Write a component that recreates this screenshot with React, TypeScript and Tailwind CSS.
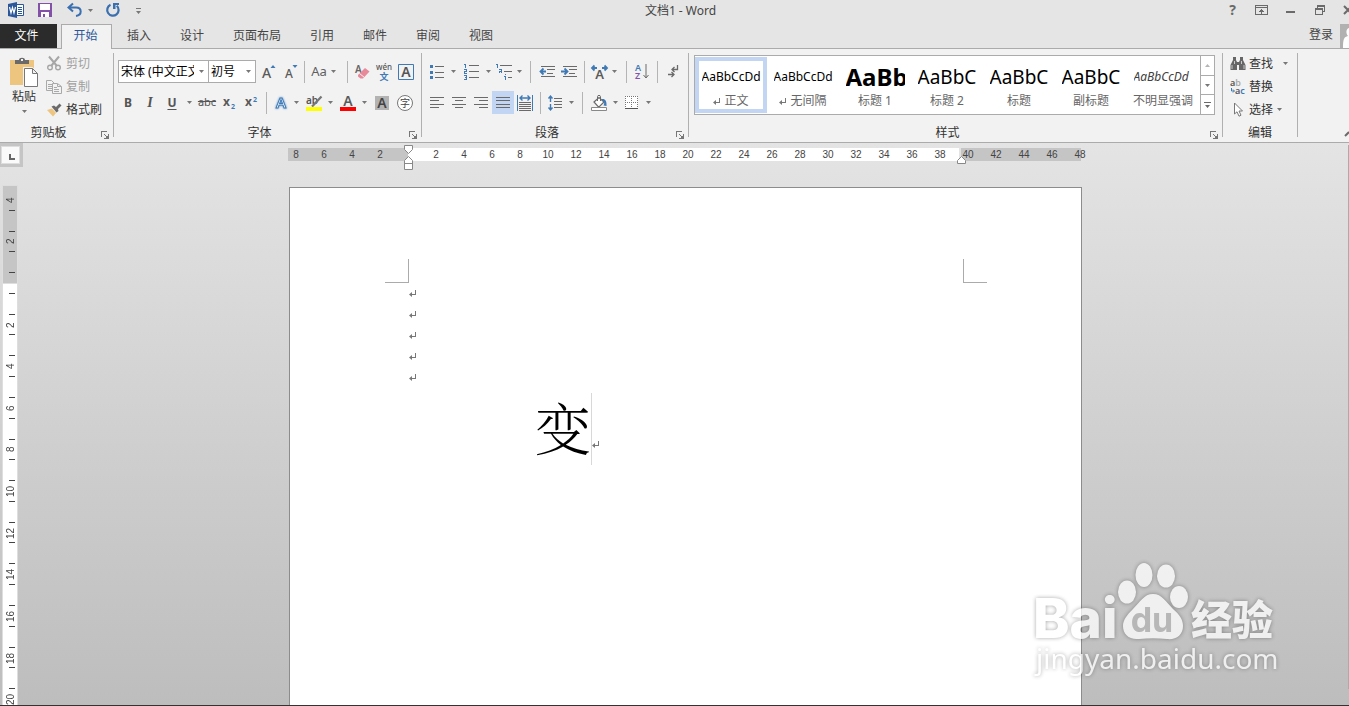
import type { ReactNode } from "react";

const UI = "font-['Noto_Sans','Noto_Sans_CJK_SC',sans-serif]";
const GRAY = "#6a6a6a";
const BLUE = "#3f7ab5";

function Arrow({ w = "w-2.5", color = "#777" }: { w?: string; color?: string }) {
  return (
    <span className={`${w} flex shrink-0 items-center justify-center`}>
      <svg width="5" height="3" viewBox="0 0 5 3" aria-hidden="true">
        <path d="M0 0H5L2.5 3Z" fill={color} />
      </svg>
    </span>
  );
}

function ArrowButton({ w = "w-2.5", label }: { w?: string; label: string }) {
  return (
    <button type="button" aria-label={label} className={`${w} flex h-[23px] shrink-0 items-center justify-center`}>
      <Arrow w="w-full" />
    </button>
  );
}

function Tool({ w = "w-[22px]", label, active = false, children }: { w?: string; label: string; active?: boolean; children: ReactNode }) {
  return (
    <button
      type="button"
      aria-label={label}
      className={`${w} flex h-[23px] shrink-0 items-center justify-center ${active ? "bg-[#c2d5f2]" : ""}`}
    >
      {children}
    </button>
  );
}

function Sep({ w = "w-2" }: { w?: string }) {
  return (
    <span className={`${w} flex h-[22px] shrink-0 justify-center`}>
      <span className="w-px bg-[#b4b4b4]" />
    </span>
  );
}

function Pic({ w = 16, h = 16, crisp = false, children }: { w?: number; h?: number; crisp?: boolean; children: ReactNode }) {
  return (
    <svg
      width={w}
      height={h}
      viewBox={`0 0 ${w} ${h}`}
      fill="none"
      className="shrink-0 overflow-visible"
      shapeRendering={crisp ? "crispEdges" : "auto"}
      aria-hidden="true"
    >
      {children}
    </svg>
  );
}

function Group({ title, width, launcher = true, children }: { title: string; width: string; launcher?: boolean; children: ReactNode }) {
  return (
    <section className={`${width} flex shrink-0`}>
      <div className="flex min-w-0 flex-1 flex-col">
        {children}
        <div className="mt-auto flex h-[18px] items-center">
          <h2 className={`flex-1 text-center text-xs text-[#333] ${launcher ? "pr-1" : ""}`}>{title}</h2>
          {launcher && (
            <button type="button" aria-label={`${title}设置`} className="flex w-3 items-center pt-1">
              <Pic w={8} h={8} crisp>
                <path d="M0.5 6V0.5H6M3 3L6 6M7.5 3V7.5H3" stroke="#777" />
                <path d="M4 7H7V4Z" fill="#777" />
              </Pic>
            </button>
          )}
        </div>
      </div>
      <div className="mt-1 mb-[5px] w-px bg-[#b0b0b0]" />
    </section>
  );
}

function Combo({ label, value, className }: { label: string; value: string; className: string }) {
  return (
    <div className={`relative h-[23px] shrink-0 ${className}`}>
      <select
        aria-label={label}
        className="block h-full w-full appearance-none overflow-hidden border border-[#ababab] bg-white pr-[14px] pl-0.5 text-xs text-black"
      >
        <option>{value}</option>
      </select>
      <span className="pointer-events-none absolute inset-y-0 right-[5px] flex items-center">
        <Arrow w="w-[5px]" />
      </span>
    </div>
  );
}

function TitleBar() {
  return (
    <header className="flex h-6 items-start text-xs">
      <div className="flex h-5 flex-1 items-center pl-2">
        <Pic>
          <path d="M8 2.5H15.5V13.5H8" fill="#fff" stroke="#2b579a" />
          <path d="M10 5.5H14M10 7.5H14M10 9.5H14M10 11.5H14" stroke="#2b579a" />
          <path d="M0 2L9 0V16L0 14Z" fill="#2b579a" />
          <path d="M1.5 5L3 11L4.5 5.5L6 11L7.5 5" stroke="#fff" strokeWidth="1.2" />
        </Pic>
        <button type="button" aria-label="保存" className="ml-1 flex w-[34px] justify-center">
          <Pic w={14} h={14} crisp>
            <path d="M0 0H14V14H0Z" fill="#8351a8" />
            <path d="M2 1H12V7H2ZM3 9H11V14H3Z" fill="#fff" />
            <path d="M5 11H7V14H5Z" fill="#8351a8" />
          </Pic>
        </button>
        <button type="button" aria-label="撤消" className="flex w-6 justify-center">
          <Pic w={15} h={14}>
            <path d="M6 0.5L1.5 4.5L6 8.5M2 4.5H9C12 4.5 13.7 6.3 13.7 8.5C13.7 11 12 12.5 9 12.9" stroke="#3a6fb0" strokeWidth="2" />
          </Pic>
        </button>
        <ArrowButton w="w-2" label="撤消选项" />
        <button type="button" aria-label="重复" className="flex w-[38px] justify-center">
          <Pic w={14} h={14}>
            <path d="M4.500 1.800A5.700 5.700 0 1 0 10.800 2.800" stroke="#3a6fb0" strokeWidth="2.200" />
            <path d="M7 0H13V2H9.500V6H7Z" fill="#3a6fb0" />
          </Pic>
        </button>
        <button type="button" aria-label="自定义快速访问工具栏" className="flex w-3 justify-center pt-0.5">
          <Pic w={5} h={6}>
            <path d="M0 0H5V1H0ZM0 3H5L2.5 6Z" fill="#777" />
          </Pic>
        </button>
      </div>
      <h1 className="flex h-[22px] items-center pl-1 text-[#444]">文档1 - Word</h1>
      <div className="flex h-5 flex-1 items-center justify-end overflow-hidden">
        <button type="button" aria-label="帮助" className="flex w-[29px] justify-center text-sm font-bold text-[#6a6a6a]">?</button>
        <button type="button" aria-label="功能区显示选项" className="flex w-[29px] justify-center">
          <Pic w={13} h={10} crisp>
            <path d="M0.5 0.5H12.5V9.5H0.5ZM1 2.5H12M6.5 4V9M4 6.5H9M5 5.5H8" stroke={GRAY} />
          </Pic>
        </button>
        <button type="button" aria-label="最小化" className="flex w-[29px] justify-center pt-1">
          <Pic w={9} h={2} crisp>
            <path d="M0 0H9V2H0Z" fill={GRAY} />
          </Pic>
        </button>
        <button type="button" aria-label="还原" className="flex w-[29px] justify-center">
          <Pic w={10} h={10} crisp>
            <path d="M2.5 3V0.5H9.5V6.5H8M0.5 3.5H7.5V9.5H0.5ZM1 4.5H7M3 1.5H9" stroke={GRAY} />
          </Pic>
        </button>
        <button type="button" aria-label="关闭" className="flex w-[15px] justify-end">
          <Pic w={5} h={10}>
            <path d="M0 1L8 9M0 9L8 1" stroke={GRAY} strokeWidth="2" />
          </Pic>
        </button>
      </div>
    </header>
  );
}

const TABS = ["插入", "设计", "页面布局", "引用", "邮件", "审阅", "视图"];

function Tabs() {
  return (
    <nav className="flex h-[25px] text-xs text-[#444]">
      <button type="button" className="w-[57px] bg-[#2b2b2b] pr-1 pb-0.5 text-white">文件</button>
      <button type="button" className="relative z-10 ml-1 w-[51px] border border-b-0 border-[#ababab] bg-[#f2f2f2] pr-0.5 pb-0.5 text-[#2b579a]">
        开始
      </button>
      <div className="ml-[15px] flex gap-[29px] pb-0.5">
        {TABS.map((t) => (
          <button key={t} type="button" className="shrink-0">{t}</button>
        ))}
      </div>
      <div className="ml-auto flex items-stretch gap-[7px]">
        <button type="button" className="pb-[3px]">登录</button>
        <Pic w={9} h={24}>
          <path d="M0 0H9V24H0Z" fill="#b1b1b1" />
          <path d="M9 4C5.500 5 6 10 8 12C4 13 3 15 3 24H9Z" fill="#fff" />
        </Pic>
      </div>
    </nav>
  );
}

function Clipboard() {
  return (
    <Group title="剪贴板" width="w-[114px]">
      <div className="flex pt-[3px] text-xs text-[#333]">
        <button type="button" className="flex w-[46px] flex-col items-center pt-[5px] pl-0.5">
          <Pic w={28} h={31}>
            <path d="M0 3H24V28H0Z" fill="#edc57e" />
            <path d="M5 7V3H9C9 0 15 0 15 3H19V7Z" fill="#6a6a6a" />
            <path d="M11 2H13V4H11Z" fill="#f2f2f2" />
            <path d="M13 10H22.500L28 15.500V31H13Z" fill="#f2f2f2" />
            <path d="M14.500 11.500H22.500L27.500 16.500V29.500H14.500ZM22.500 11.500V16.500H27.500" fill="#fff" stroke="#777" />
          </Pic>
          <span className="leading-[18px]">粘贴</span>
          <span className="flex h-2.5 items-center">
            <Arrow />
          </span>
        </button>
        <div className="flex flex-col">
          <button type="button" className="flex h-[23px] items-center gap-1 text-[#a0a0a0]">
            <span className="flex w-4 justify-center">
              <Pic w={14} h={15}>
                <path d="M2 0.500L9.500 9.500M12 0.500L4.500 9.500" stroke="#a6a6a6" strokeWidth="2" />
                <circle cx="3" cy="11.500" r="2.300" stroke="#a6a6a6" strokeWidth="1.400" />
                <circle cx="11" cy="11.500" r="2.300" stroke="#a6a6a6" strokeWidth="1.400" />
              </Pic>
            </span>
            剪切
          </button>
          <button type="button" className="flex h-[23px] items-center gap-1 text-[#a0a0a0]">
            <Pic w={16} h={14}>
              <path d="M7 10.500H0.500V0.500H5.500L8.500 3.500M2 4.500H6M2 6.500H6M2 8.500H6" stroke="#a9a9a9" />
              <path d="M6.500 3.500H11.500L15.500 6.500V13.500H6.500ZM11.500 4V6.500H15M8 7.500H11M8 9.500H13M8 11.500H13" fill="#f2f2f2" stroke="#a9a9a9" />
            </Pic>
            复制
          </button>
          <button type="button" className="flex h-[23px] items-center gap-1">
            <Pic w={16} h={14}>
              <path d="M1 7L6 5.500L10 10L7 13.500Z" fill="#edc57e" />
              <path d="M5.500 3.500L8 2.500L10 4L13.500 0.500L15.500 2.500L12 6L12.500 8L10.500 9.500Z" fill="#6a6a6a" />
            </Pic>
            格式刷
          </button>
        </div>
      </div>
    </Group>
  );
}

function FontGroup() {
  return (
    <Group title="字体" width="w-[308px]">
      <div className="flex items-center pt-[11px] pl-1 text-[#5f5f5f]">
        <Combo label="字体" value="宋体 (中文正文)" className="w-[91px]" />
        <Combo label="字号" value="初号" className="-ml-px w-12" />
        <Tool w="w-[23px]" label="增大字号">
          <Pic w={12} h={16}>
            <text x="0" y="14" fontSize="14" fontWeight="500" fill="#5a5a5a">A</text>
            <path d="M8.500 4L11 1L13.500 4Z" fill={BLUE} />
          </Pic>
        </Tool>
        <Tool label="减小字号">
          <Pic w={12} h={16}>
            <text x="1" y="14" fontSize="12" fontWeight="500" fill="#5a5a5a">A</text>
            <path d="M8.500 1L11 4L13.500 1Z" fill={BLUE} />
          </Pic>
        </Tool>
        <Sep w="w-1.5" />
        <Tool w="w-[37px]" label="更改大小写">
          <span className="text-[13px]">Aa</span>
          <Arrow w="w-[13px]" />
        </Tool>
        <Sep w="w-1.5" />
        <Tool w="w-6" label="清除所有格式">
          <Pic w={14}>
            <text x="0" y="9" fontSize="10" fontWeight="600" fill="#666">A</text>
            <path d="M3 11L10 4L14.500 7.500L8 14.500H5.500L3 12.500Z" fill="#e8899a" />
            <path d="M4.500 9.500L9.500 13.500" stroke="#f2f2f2" />
          </Pic>
        </Tool>
        <Tool label="拼音指南">
          <Pic w={18} h={18}>
            <text x="8" y="7" fontSize="8" fontWeight="500" textAnchor="middle" fill="#555">wén</text>
            <text x="8" y="17" fontSize="9" fontWeight="700" textAnchor="middle" fill={BLUE}>文</text>
          </Pic>
        </Tool>
        <Tool w="w-5" label="字符边框">
          <Pic w={16} h={16}>
            <path d="M0.500 0.500H15.500V15.500H0.500Z" stroke={BLUE} />
            <text x="8" y="13" fontSize="14" fontWeight="600" textAnchor="middle" fill="#555">A</text>
          </Pic>
        </Tool>
      </div>
      <div className="flex items-center pt-2 pl-[3px] text-xs text-[#555]">
        <Tool label="加粗"><b>B</b></Tool>
        <Tool label="倾斜"><i className="font-['Liberation_Serif',serif] text-sm font-bold">I</i></Tool>
        <Tool label="下划线"><span className="font-bold underline underline-offset-2">U</span></Tool>
        <ArrowButton w="w-3" label="下划线样式" />
        <Tool w="w-6" label="删除线"><span className="text-[11px] line-through">abc</span></Tool>
        <Tool label="下标">
          <Pic w={14} h={14}>
            <text x="0" y="10" fontSize="12" fontWeight="700" fill="#5a5a5a">x</text>
            <text x="8" y="13" fontSize="7" fontWeight="700" fill={BLUE}>2</text>
          </Pic>
        </Tool>
        <Tool label="上标">
          <Pic w={14} h={14}>
            <text x="0" y="10" fontSize="12" fontWeight="700" fill="#5a5a5a">x</text>
            <text x="8" y="6" fontSize="7" fontWeight="700" fill={BLUE}>2</text>
          </Pic>
        </Tool>
        <Sep w="w-1.5" />
        <Tool label="文本效果">
          <Pic w={14} h={16}>
            <text x="8" y="13" fontSize="15" fontWeight="600" textAnchor="middle" fill="#fff" stroke={BLUE} strokeWidth="1" className="drop-shadow-[0_0_1px_#5b93cf]">A</text>
          </Pic>
        </Tool>
        <ArrowButton label="文本效果选项" />
        <Tool w="w-6" label="突出显示">
          <Pic w={15} h={16}>
            <text x="0" y="9" fontSize="10" fontWeight="600" fill="#555">ab</text>
            <path d="M15.500 1.500L8 9.500L6 11.500" stroke="#777" strokeWidth="2.200" />
            <path d="M0 12H16V16H0Z" fill="#ffff00" />
          </Pic>
        </Tool>
        <ArrowButton label="突出显示颜色" />
        <Tool w="w-6" label="字体颜色">
          <Pic w={14} h={16}>
            <text x="8" y="11" fontSize="14" fontWeight="600" textAnchor="middle" fill="#5a5a5a">A</text>
            <path d="M0 12H16V16H0Z" fill="#ff0000" />
          </Pic>
        </Tool>
        <ArrowButton label="字体颜色选项" />
        <Tool w="w-[26px]" label="字符底纹">
          <Pic w={14} h={14}>
            <path d="M0 0H14V14H0Z" fill="#b3b3b3" />
            <text x="7" y="12" fontSize="14" fontWeight="600" textAnchor="middle" fill="#444">A</text>
          </Pic>
        </Tool>
        <Tool w="w-5" label="带圈字符">
          <Pic w={16} h={16}>
            <circle cx="8" cy="8" r="7.500" fill="#fff" stroke="#777" />
            <text x="8" y="12" fontSize="10" textAnchor="middle" fill="#444">字</text>
          </Pic>
        </Tool>
      </div>
    </Group>
  );
}

function Lines({ d }: { d: string }) {
  return (
    <Pic w={14} h={11} crisp>
      <path d={d} stroke={GRAY} />
    </Pic>
  );
}

function ParagraphGroup() {
  return (
    <Group title="段落" width="w-[267px]">
      <div className="flex items-center pt-[11px] pl-1">
        <Tool label="项目符号">
          <Pic w={14} h={15} crisp>
            <path d="M5 2.500H14M5 8.500H14M5 13.500H14" stroke={GRAY} />
            <path d="M0 1H3V4H0ZM0 7H3V10H0ZM0 12H3V15H0Z" fill={BLUE} />
          </Pic>
        </Tool>
        <ArrowButton label="项目符号库" />
        <Tool w="w-[26px]" label="编号">
          <Pic w={15} h={17} crisp>
            <path d="M5 2.500H15M5 8.500H15M5 14.500H15" stroke={GRAY} />
            <path d="M0 1.500H1.500V5M0 6.500H2.500V8.500H0.500V10.500H3M0 12.500H2.500V16.500H0M1 14.500H2" stroke={BLUE} />
          </Pic>
        </Tool>
        <ArrowButton w="w-2" label="编号库" />
        <Tool label="多级列表">
          <Pic w={16} h={17} crisp>
            <path d="M5 2.500H17M9 8.500H17M13 14.500H17" stroke={GRAY} />
            <path d="M1 1.500H2.500V5M4 6.500H6.500V10M7 8.500H4.500V10M10.500 11V12M9 13.500H10.500V17" stroke={BLUE} />
          </Pic>
        </Tool>
        <ArrowButton label="多级列表库" />
        <Sep w="w-3" />
        <Tool label="减少缩进量">
          <Pic w={16} h={11}>
            <path d="M2 0.500H16M8 3.500H16M8 7.500H14M2 10.500H16" stroke={GRAY} shapeRendering="crispEdges" />
            <path d="M4.500 2.500L1.500 5.500L4.500 8.500M1.500 5.500H7" stroke={BLUE} strokeWidth="1.800" />
          </Pic>
        </Tool>
        <Tool label="增加缩进量">
          <Pic w={16} h={11}>
            <path d="M2 0.500H16M8 3.500H16M8 7.500H14M2 10.500H16" stroke={GRAY} shapeRendering="crispEdges" />
            <path d="M3.500 2.500L6.500 5.500L3.500 8.500M0 5.500H6" stroke={BLUE} strokeWidth="1.800" />
          </Pic>
        </Tool>
        <Sep />
        <Tool label="中文版式">
          <Pic w={17} h={14}>
            <text x="8.500" y="14" fontSize="13" fontWeight="600" textAnchor="middle" fill="#5a5a5a">A</text>
            <path d="M3.500 0.500L1 3L3.500 5.500M1 3H6M13.500 0.500L16 3L13.500 5.500M16 3H11" stroke={BLUE} strokeWidth="1.800" />
          </Pic>
        </Tool>
        <ArrowButton w="w-2" label="中文版式选项" />
        <Sep w="w-4" />
        <Tool w="w-4" label="排序">
          <Pic w={14} h={17}>
            <text x="0" y="8" fontSize="9" fontWeight="600" fill={BLUE}>A</text>
            <text x="0" y="16" fontSize="9" fontWeight="600" fill="#8351a8">Z</text>
            <path d="M11 1V14.500M8.500 12L11 15L13.500 12" stroke={GRAY} />
          </Pic>
        </Tool>
        <Sep w="w-3.5" />
        <Tool w="w-[18px]" label="显示编辑标记">
          <Pic w={11} h={13}>
            <path d="M9.500 0V4.500H4M6.500 2L4 4.500L6.500 7M0 9.500H5.500M3.500 7L6 9.500L3.500 12" stroke={GRAY} strokeWidth="1.300" />
          </Pic>
        </Tool>
      </div>
      <div className="flex items-center pt-2 pl-1">
        <Tool label="左对齐"><Lines d="M0 0.500H14M0 3.500H9M0 7.500H14M0 10.500H9" /></Tool>
        <Tool label="居中"><Lines d="M0 0.500H14M3 3.500H11M0 7.500H14M3 10.500H11" /></Tool>
        <Tool label="右对齐"><Lines d="M0 0.500H14M5 3.500H14M0 7.500H14M5 10.500H14" /></Tool>
        <Tool label="两端对齐" active><Lines d="M0 0.500H14M0 3.500H14M0 7.500H14M0 10.500H14" /></Tool>
        <Tool label="分散对齐">
          <Pic w={16} h={16}>
            <path d="M0.500 0V16M15.500 0V16" stroke={BLUE} />
            <path d="M5.500 0.500L3 3L5.500 5.500M10.500 0.500L13 3L10.500 5.500M3 3H13" stroke={BLUE} strokeWidth="1.400" />
            <path d="M2 7.500H14M2 9.500H14M2 11.500H14M2 13.500H14M2 15.500H14" stroke={GRAY} shapeRendering="crispEdges" />
          </Pic>
        </Tool>
        <Sep />
        <Tool label="行距">
          <Pic w={14} h={16}>
            <path d="M6 3.500H14M6 6.500H14M6 9.500H14M6 12.500H14" stroke={GRAY} shapeRendering="crispEdges" />
            <path d="M0.500 3.500L2.500 1L4.500 3.500M0.500 12.500L2.500 15L4.500 12.500M2.500 1V7M2.500 9V15" stroke={BLUE} strokeWidth="1.400" />
          </Pic>
        </Tool>
        <ArrowButton label="行距选项" />
        <Sep w="w-3" />
        <Tool label="底纹">
          <Pic w={17} h={16}>
            <path d="M0.500 12.500H15.500V15.500H0.500Z" fill="#fff" stroke="#888" />
            <path d="M3 7L8 2.500L13 7L8.500 11.500H7Z" fill="#fff" stroke={GRAY} strokeWidth="1.200" />
            <path d="M6.500 6V1.500C6.500 0 9.500 0 9.500 1.500V6" stroke={GRAY} />
            <path d="M11 4C14 3.500 16 6 15.500 11L12.500 10.500C14 8 13 6 11 5.500Z" fill={BLUE} />
          </Pic>
        </Tool>
        <ArrowButton label="底纹颜色" />
        <Tool label="边框">
          <Pic w={13} h={13} crisp>
            <path d="M0 0H13V13H0Z" fill="#fff" />
            <path d="M0 0.500H13M0 6.500H13M0.500 0V12M6.500 0V12M12.500 0V12" stroke="#777" strokeDasharray="1 1" />
            <path d="M0 12.500H13" stroke="#555" />
          </Pic>
        </Tool>
        <ArrowButton w="w-3" label="边框选项" />
      </div>
    </Group>
  );
}

const STYLES = [
  { sample: "AaBbCcDd", name: "正文", mark: true, cls: "text-xs text-black" },
  { sample: "AaBbCcDd", name: "无间隔", mark: true, cls: "text-xs text-black" },
  { sample: "AaBb", name: "标题 1", mark: false, cls: "text-2xl font-bold text-black" },
  { sample: "AaBbC", name: "标题 2", mark: false, cls: "text-[19px] text-black" },
  { sample: "AaBbC", name: "标题", mark: false, cls: "text-[19px] text-black" },
  { sample: "AaBbC", name: "副标题", mark: false, cls: "text-[19px] text-black" },
  { sample: "AaBbCcDd", name: "不明显强调", mark: false, cls: "text-xs italic text-[#404040]" },
];

function StylesGroup() {
  return (
    <Group title="样式" width="w-[534px]">
      <div className="mt-1.5 ml-[5px] flex h-[60px] w-[521px] border border-[#ababab] bg-white">
        <div className="flex flex-1 py-px">
          {STYLES.map((s, i) => (
            <button
              key={s.name}
              type="button"
              className={`flex w-[72px] shrink-0 flex-col items-center border-4 ${i === 0 ? "border-[#c2d5f2]" : "border-transparent"}`}
            >
              <span className={`flex h-8 w-[59px] items-center overflow-hidden whitespace-nowrap ${s.cls}`}>{s.sample}</span>
              <span className="flex h-4 items-center gap-1 text-xs whitespace-nowrap text-[#666]">
                {s.mark && <ReturnMark />}
                {s.name}
              </span>
            </button>
          ))}
        </div>
        <div className="flex w-[14px] flex-col divide-y divide-[#ababab] border-l border-[#ababab]">
          <button type="button" aria-label="上一行" className="flex flex-1 items-center justify-center">
            <Pic w={5} h={3}><path d="M0 3H5L2.500 0Z" fill="#b5b5b5" /></Pic>
          </button>
          <button type="button" aria-label="下一行" className="flex flex-1 items-center justify-center"><Arrow /></button>
          <button type="button" aria-label="其他样式" className="flex flex-1 items-center justify-center">
            <Pic w={7} h={6}><path d="M0 0H7V1H0ZM1 3H6L3.500 6Z" fill="#6a6a6a" /></Pic>
          </button>
        </div>
      </div>
    </Group>
  );
}

function EditGroup() {
  return (
    <Group title="编辑" width="w-[75px]" launcher={false}>
      <div className="flex flex-col pt-[3px] pl-[7px] text-xs text-[#333]">
        <button type="button" className="flex h-[23px] items-center">
          <Pic w={16} h={13}>
            <path d="M3 0H6V3L7 5V13H0.500V8L3 3ZM10 0H13V3L15.500 8V13H9V5L10 3ZM7 5H9V8H7Z" fill="#666" />
            <path d="M2 8V12M4.500 4V7M11.500 4V7M14 8V12" stroke="#f2f2f2" strokeWidth="0.700" />
          </Pic>
          <span className="pl-[3px]">查找</span>
          <Arrow w="w-6" />
        </button>
        <button type="button" className="flex h-[23px] items-center">
          <Pic w={16} h={16}>
            <text x="0" y="7" fontSize="9" fontWeight="600" fill="#555">a<tspan fill="#aaa">b</tspan></text>
            <text x="5" y="15" fontSize="9" fontWeight="600" fill="#555">a<tspan fill={BLUE}>c</tspan></text>
            <path d="M1.500 9V12H4M3 10.500L4.500 12L3 13.500" stroke={BLUE} />
          </Pic>
          <span className="pl-[3px]">替换</span>
        </button>
        <button type="button" className="flex h-[23px] items-center">
          <Pic w={16} h={15}>
            <path d="M4.500 1V12L7 9.800L9 14.200L11 13.200L9 9H12.500Z" fill="#fff" stroke="#777" />
          </Pic>
          <span className="pl-[3px]">选择</span>
          <Arrow w="w-3" />
        </button>
      </div>
    </Group>
  );
}

function ReturnMark() {
  return (
    <Pic w={7} h={7}>
      <path d="M6.500 0V4.500H2" stroke="#777" shapeRendering="crispEdges" />
      <path d="M0 4.500L3 2V7Z" fill="#777" />
    </Pic>
  );
}

const evens = (from: number, to: number) => Array.from({ length: (to - from) / 2 + 1 }, (_, i) => from + i * 2);

function RulerNumbers({ values }: { values: number[] }) {
  return (
    <>
      {values.map((n) => (
        <span key={n} className="w-7 shrink-0 text-center">{n}</span>
      ))}
    </>
  );
}

function HorizontalRuler() {
  return (
    <div className="relative -left-px mx-auto mt-[5px] flex h-[13px] w-[793px] font-['Liberation_Sans',sans-serif] text-[10px] leading-[13px] text-[#444]">
      <div className="flex w-[120px] bg-[#c5c5c5]">
        <div className="-ml-1.5 flex">
          <RulerNumbers values={[8, 6, 4, 2]} />
        </div>
      </div>
      <div className="flex flex-1 bg-white pl-3.5">
        <RulerNumbers values={evens(2, 38)} />
      </div>
      <div className="ml-0.5 flex w-[120px] bg-[#c5c5c5]">
        <div className="-ml-[7px] flex">
          <RulerNumbers values={evens(40, 48)} />
        </div>
      </div>
      <span className="absolute -top-[3px] left-[116px]">
        <Pic w={9} h={25}>
          <path d="M0.500 0.500H8.500V4.500L4.500 8.500L0.500 4.500ZM4.500 11.500L8.500 15.500V24.500H0.500V15.500ZM0.500 18.500H8.500" fill="#fff" stroke="#888" />
        </Pic>
      </span>
      <span className="absolute top-2 left-[669px]">
        <Pic w={9} h={8}>
          <path d="M4.500 0.500L8.500 4.500V7.500H0.500V4.500Z" fill="#fff" stroke="#888" />
        </Pic>
      </span>
    </div>
  );
}

function VerticalRuler() {
  const cells = [4, 2, 0, ...evens(2, 20)];
  return (
    <div className="relative mt-[19px] ml-[3px] flex min-h-0 w-3.5 flex-1 flex-col overflow-hidden bg-white outline outline-[#dedede]">
      <div className="h-[98px] shrink-0 border-b border-[#dedede] bg-[#c5c5c5]" />
      <div className="absolute inset-x-0 -top-[7px] flex h-[541px] flex-col font-['Liberation_Sans',sans-serif] text-[10px] text-[#444]">
        {cells.map((n, i) => (
          <div key={i} className="flex flex-1 flex-col items-center justify-between py-2.5">
            <span className={`ml-1 h-px w-1.5 ${i === 0 ? "bg-transparent" : "bg-[#444]"}`} />
            <span className="ml-0.5 flex h-3 rotate-180 items-center justify-center leading-[12px] [writing-mode:vertical-rl]">{n || ""}</span>
            <span className="ml-1 h-px w-1.5 bg-[#444]" />
          </div>
        ))}
      </div>
    </div>
  );
}

function Page() {
  return (
    <main className="mx-auto mt-[26px] w-[793px] flex-1 border border-b-0 border-[#8c8c8c] bg-white pt-[71px]">
      <div className="flex justify-between pr-[94px] pl-[95px]">
        <span className="size-6 border-r border-b border-[#ababab]" />
        <span className="size-6 border-b border-l border-[#ababab]" />
      </div>
      <div className="pl-[119px]">
        {[0, 1, 2, 3, 4].map((i) => (
          <p key={i} className="flex h-[21px] items-center"><ReturnMark /></p>
        ))}
        <p className="mt-[5px] flex h-[72px] items-center pl-[126px] text-black">
          <span className="pb-1.5 font-['Noto_Serif_CJK_SC','Noto_Sans_CJK_SC',serif] text-[56px] leading-[72px] font-light">变</span>
          <span className="h-full w-px bg-[#d8d8d8]" />
          <span className="pt-[30px]"><ReturnMark /></span>
        </p>
      </div>
    </main>
  );
}

function Watermark() {
  return (
    <div className="pointer-events-none absolute right-[65px] bottom-7 opacity-75">
      <svg width="250" height="126" viewBox="0 0 250 126" fill="#fff" className="overflow-visible drop-shadow-[0_0_2px_rgba(0,0,0,0.45)]">
        <ellipse cx="93" cy="41" rx="9" ry="11.500" />
        <ellipse cx="110" cy="24" rx="8.500" ry="12" />
        <ellipse cx="132" cy="25" rx="9" ry="11.500" />
        <ellipse cx="145" cy="46" rx="9" ry="11" />
        <path d="M119 43C128 43 132 51 139 58C146 64 149 69 149 75C149 84 142 89 133 88C124 87 114 87 105 88C95 89 89 83 89 75C89 69 93 64 99 58C106 51 110 43 119 43Z" />
        <text x="-1" y="87" fontSize="55" fontWeight="800" fontFamily="Inter, sans-serif">Bai</text>
        <text x="118" y="81" fontSize="34" fontWeight="700" textAnchor="middle" fill="#b4b4b4" fontFamily="Inter, sans-serif">du</text>
        <text x="157" y="84" fontSize="41" fontWeight="900" fontFamily="'Noto Sans CJK SC', sans-serif">经验</text>
        <text x="2" y="118" fontSize="28" fontWeight="400" fontFamily="'Noto Sans', sans-serif">jingyan.baidu.com</text>
      </svg>
    </div>
  );
}

export default function App() {
  return (
    <div className={`relative flex h-screen flex-col overflow-hidden border-b border-[#333] bg-[#e5e5e5] ${UI}`}>
      <TitleBar />
      <Tabs />
      <div className="-mt-px flex h-[95px] shrink-0 border-y border-[#ababab] bg-[#f2f2f2]">
        <Clipboard />
        <FontGroup />
        <ParagraphGroup />
        <StylesGroup />
        <EditGroup />
        <button type="button" aria-label="折叠功能区" className="ml-auto flex w-1 items-end pb-1.5">
          <Pic w={4} h={5}><path d="M0 5L4 1" stroke={GRAY} strokeWidth="2" /></Pic>
        </button>
      </div>
      <div className="flex min-h-0 flex-1 bg-linear-to-b from-[#e4e4e4] to-[#bdbdbd]">
        <div className="flex w-[22px] shrink-0 flex-col">
          <button type="button" aria-label="制表符" className="h-6 w-[23px] shrink-0 bg-[#c5c5c5] pt-[3px] pr-[3px] pb-[3px] pl-px">
            <span className="flex h-full items-end border border-[#dedede] bg-[#fafafa] pb-[3px] pl-1.5">
              <Pic w={8} h={7} crisp><path d="M1 1H3V5H7V7H1Z" fill="#666" /></Pic>
            </span>
          </button>
          <VerticalRuler />
        </div>
        <div className="flex min-w-0 flex-1 flex-col">
          <HorizontalRuler />
          <Page />
        </div>
        <div className="-ml-px mt-0.5 mb-4 w-px bg-[#ababab]" />
      </div>
      <Watermark />
    </div>
  );
}
